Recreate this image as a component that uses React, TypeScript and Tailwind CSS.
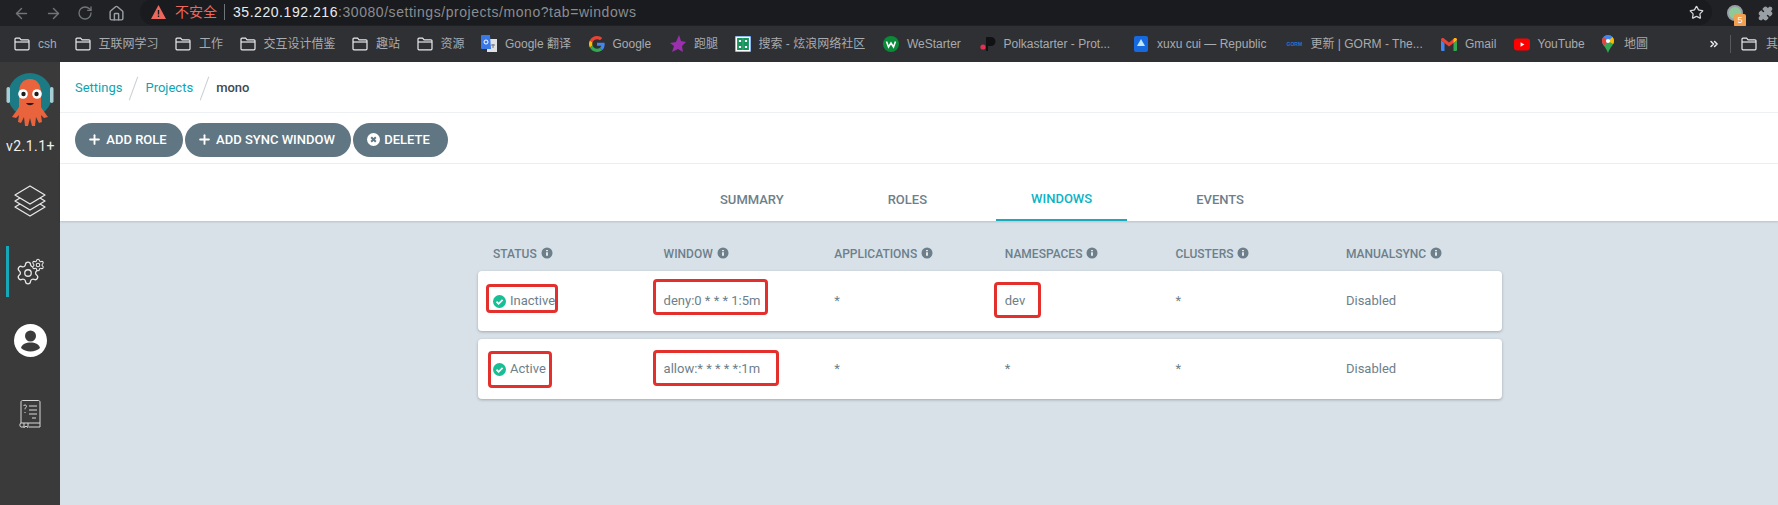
import React from 'react';
import { ArrowLeft, ArrowRight, RotateCw, Home, Star, Puzzle, Plus, ChevronsRight, Settings } from 'lucide-react';

const roboto = { fontFamily: 'Roboto, "Noto Sans CJK SC", sans-serif' };

const FolderIcon = () => (
  <svg width="16" height="14" viewBox="0 0 16 14" fill="none" stroke="#e8eaed" strokeWidth="1.2">
    <path d="M1 2.2c0-.6.4-1 1-1h3.6l1.5 1.6H14c.6 0 1 .4 1 1v8c0 .6-.4 1-1 1H2c-.6 0-1-.4-1-1z" />
    <path d="M1 5h14" />
  </svg>
);

const TranslateIcon = () => (
  <svg width="16" height="18" viewBox="0 0 16 18">
    <rect x="6" y="4" width="10" height="13" fill="#dfe1e5" />
    <path d="M1 0h8l1 14H1a1 1 0 0 1-1-1V1a1 1 0 0 1 1-1z" fill="#3b78e7" />
    <circle cx="5" cy="7" r="2" fill="none" stroke="#fff" strokeWidth="1" />
    <path d="M10 10h4M12 9v4" stroke="#70757a" strokeWidth="1" />
  </svg>
);

const GoogleIcon = () => (
  <svg width="16" height="16" viewBox="0 0 48 48">
    <path fill="#EA4335" d="M24 9.5c3.5 0 6.700 1.200 9.100 3.600l6.800-6.800C35.900 2.400 30.400 0 24 0 14.600 0 6.500 5.400 2.600 13.200l7.900 6.100C12.400 13.700 17.700 9.500 24 9.500z" />
    <path fill="#4285F4" d="M47 24.500c0-1.600-.1-3.100-.4-4.500H24v9h12.900c-.6 3-2.200 5.500-4.700 7.200l7.700 6C44.400 38 47 31.800 47 24.500z" />
    <path fill="#FBBC05" d="M10.500 28.700A14.500 14.500 0 0 1 10.500 19.300l-7.900-6.100a24 24 0 0 0 0 21.600z" />
    <path fill="#34A853" d="M24 48c6.500 0 11.900-2.100 15.900-5.800l-7.700-6c-2.200 1.500-5 2.300-8.200 2.300-6.300 0-11.600-4.200-13.500-9.800l-7.900 6.100C6.500 42.600 14.600 48 24 48z" />
  </svg>
);

const StarFav = () => (
  <svg width="16" height="18" viewBox="0 0 16 18">
    <path d="M9 0l2 6 5 1-4 4 1 6-5-3-6 3 2-6-4-3 6-1z" fill="#9b2fae" />
  </svg>
);

const GridFav = () => (
  <svg width="16" height="16" viewBox="0 0 16 16">
    <rect width="16" height="16" fill="#fff" stroke="#2a6fdb" />
    <path d="M3 3h4v4H3zM9 3h4v4H9zM3 9h4v4H3zM9 9h4v4H9z" fill="none" stroke="#16935a" strokeWidth="1.800" />
  </svg>
);

const WeStarterFav = () => (
  <svg width="16" height="16" viewBox="0 0 16 16">
    <circle cx="8" cy="8" r="8" fill="#0b8a3a" />
    <path d="M3.500 5.500l2 5.500L8 7l2.500 4 2-5.500" fill="none" stroke="#fff" strokeWidth="1.600" />
  </svg>
);

const PolkaFav = () => (
  <svg width="16" height="16" viewBox="0 0 16 16">
    <path d="M6 1h5a4 4 0 0 1 0 9H8v5H6z" fill="#111214" />
    <circle cx="3" cy="11" r="2.600" fill="#e6304f" />
  </svg>
);

const RepublicFav = () => (
  <svg width="14" height="16" viewBox="0 0 14 16">
    <rect width="14" height="16" rx="2" fill="#1769e0" />
    <path d="M7 3l4 7H3z" fill="#bfe6ff" />
  </svg>
);

const GormFav = () => (
  <span className="w-4 text-[5px] leading-none font-bold text-[#1f78d1] whitespace-nowrap">GORM</span>
);

const GmailFav = () => (
  <svg width="16" height="13" viewBox="0 0 16 13">
    <path d="M0 2v10a1 1 0 0 0 1 1h2.500V5z" fill="#4285f4" />
    <path d="M16 2v10a1 1 0 0 1-1 1h-2.500V5z" fill="#34a853" />
    <path d="M0 2l3.500 3L8 8.500 12.500 5 16 2c0-2-2-2.500-3-1.500L8 4.500 3 .5C2-.5 0 0 0 2z" fill="#ea4335" />
    <path d="M12.500 5L16 2c0-2-2-2.500-3-1.500l-.5.4z" fill="#fbbc05" />
  </svg>
);

const YoutubeFav = () => (
  <svg width="17" height="13" viewBox="0 0 17 13">
    <rect width="17" height="13" rx="3.500" fill="#f00" />
    <path d="M7 4l4 2.500L7 9z" fill="#fff" />
  </svg>
);

const MapFav = () => (
  <svg width="12" height="18" viewBox="0 0 12 18">
    <path d="M6 0a6 6 0 0 1 6 6c0 4-4 6-6 12C4 12 0 10 0 6a6 6 0 0 1 6-6z" fill="#34a853" />
    <path d="M6 0a6 6 0 0 1 4.500 2L2 10.500C1 9 0 7.800 0 6a6 6 0 0 1 6-6z" fill="#4285f4" />
    <path d="M1.500 2L6 6 2 10.500C1 9 0 7.800 0 6c0-1.500.6-3 1.500-4z" fill="#ea4335" />
    <path d="M10.500 2A6 6 0 0 1 12 6c0 1-.3 2-.8 3L6 6z" fill="#fbbc05" />
    <circle cx="6" cy="6" r="2.100" fill="#fff" />
  </svg>
);

const bookmarks: { icon: React.ReactNode; label: string; w: number }[] = [
  { icon: <FolderIcon />, label: 'csh', w: 20 },
  { icon: <FolderIcon />, label: '互联网学习', w: 60 },
  { icon: <FolderIcon />, label: '工作', w: 24 },
  { icon: <FolderIcon />, label: '交互设计借鉴', w: 72 },
  { icon: <FolderIcon />, label: '趣站', w: 24 },
  { icon: <FolderIcon />, label: '资源', w: 24 },
  { icon: <TranslateIcon />, label: 'Google 翻译', w: 67 },
  { icon: <GoogleIcon />, label: 'Google', w: 41 },
  { icon: <StarFav />, label: '跑腿', w: 24 },
  { icon: <GridFav />, label: '搜索 - 炫浪网络社区', w: 108 },
  { icon: <WeStarterFav />, label: 'WeStarter', w: 56 },
  { icon: <PolkaFav />, label: 'Polkastarter - Prot...', w: 113 },
  { icon: <RepublicFav />, label: 'xuxu cui — Republic', w: 113 },
  { icon: <GormFav />, label: '更新 | GORM - The...', w: 114 },
  { icon: <GmailFav />, label: 'Gmail', w: 32 },
  { icon: <YoutubeFav />, label: 'YouTube', w: 46 },
  { icon: <MapFav />, label: '地圖', w: 24 },
];

const BrowserChrome = () => (
  <div className="shrink-0" style={{ fontFamily: '"Liberation Sans", "Noto Sans CJK SC", sans-serif' }}>
    <div className="h-[26px] bg-[#202124] flex items-center">
      <div className="w-[140px] pl-[13px] flex items-center gap-[15px] text-[#70757a]">
        <ArrowLeft size={17} />
        <ArrowRight size={17} />
        <RotateCw size={16} />
        <Home size={17} className="text-[#9aa0a6]" />
      </div>
      <div className="w-[1572px] h-[26px] -mt-[2px] bg-[#1a1b1e] rounded-r-full rounded-l-full flex items-center pl-[11px] pr-[6px]">
        <svg width="15" height="14" viewBox="0 0 15 14" className="shrink-0">
          <path d="M7.500 0L15 14H0z" fill="#ee675c" />
          <path d="M7.500 5v4.500M7.500 10.500v1.500" stroke="#1a1b1e" strokeWidth="1.400" />
        </svg>
        <span className="ml-[9px] text-[14px] text-[#ee675c]">不安全</span>
        <span className="ml-[7px] h-[16px] w-px bg-[#70757a]" />
        <span className="ml-[8px] text-[14px] tracking-[0.55px] text-[#e8eaed]">
          35.220.192.216<span className="text-[#8a8d91]">:30080/settings/projects/mono?tab=windows</span>
        </span>
        <Star size={15} className="ml-auto mr-[2px] text-[#d5d7da]" />
      </div>
      <div className="relative ml-[15px] w-[16px] h-[16px] rounded-full bg-[#8fc99a] border-2 border-[#9aa0a6]">
        <span className="absolute left-[5px] top-[7px] w-[12px] h-[13px] rounded-[2px] bg-[#f0a050] text-white text-[9px] leading-[13px] text-center">5</span>
      </div>
      <Puzzle size={15} className="ml-[15px] text-[#9aa0a6] fill-[#9aa0a6]" />
    </div>
    <div className="h-[36px] bg-[#2f3033] flex items-center pl-[14px] relative">
      {bookmarks.map(b => (
        <div key={b.label} className="flex items-center shrink-0 mr-[16.5px]">
          <span className="w-[16px] mr-[8px] flex items-center justify-center">{b.icon}</span>
          <span className="text-[12px] text-[#a8abaf] whitespace-nowrap" style={{ width: b.w }}>{b.label}</span>
        </div>
      ))}
      <div className="absolute right-0 top-0 h-full w-[74px] flex items-center bg-[#2f3033]">
        <ChevronsRight size={14} strokeWidth={3} className="text-[#e8eaed] ml-[4px]" />
        <span className="ml-[10px] h-[18px] w-px bg-[#55585c]" />
        <span className="ml-[10px]"><FolderIcon /></span>
        <span className="ml-[9px] text-[12px] text-[#a8abaf] whitespace-nowrap">其</span>
      </div>
    </div>
  </div>
);

const ArgoLogo = () => (
  <svg width="48" height="61" viewBox="0 0 48 61">
    <circle cx="24" cy="23" r="22" fill="#1b7a84" />
    <rect x="0.500" y="15" width="3.500" height="16" rx="1.700" fill="#a8cdd4" />
    <rect x="44" y="15" width="3.500" height="16" rx="1.700" fill="#a8cdd4" />
    <path d="M13 21c0-9 4-14 11-14s11 5 11 14v14c3 5 5 7 7 10l-4 1-3-3 1 7-3 1-3-6-1 9h-3l-2-8-2 8h-3l-1-9-3 6-3-1 1-7-3 3-4-1c2-3 4-5 7-10z" fill="#e9633d" />
    <circle cx="17" cy="22" r="4.800" fill="#fff" />
    <circle cx="31" cy="22" r="4.800" fill="#fff" />
    <circle cx="17.500" cy="22" r="2.200" fill="#1d1d1d" />
    <circle cx="30.500" cy="22" r="2.200" fill="#1d1d1d" />
    <path d="M20 31c2 3 6 3 8 0z" fill="#2b1b16" />
  </svg>
);

const LayersIcon = () => (
  <svg width="34" height="34" viewBox="0 0 34 34" fill="none" stroke="#e8e8e8" strokeWidth="1.300" strokeLinejoin="round">
    <path d="M17 3L32 12 17 21 2 12z" />
    <path d="M7 15L2 18 17 27 32 18l-5-3" />
    <path d="M7 21l-5 3 15 9 15-9-5-3" />
  </svg>
);

const GearsIcon = () => (
  <svg width="30" height="28" viewBox="0 0 30 28">
    <Settings x={0} y={2} width={26} height={26} stroke="#e8e8e8" strokeWidth={1.200} />
    <Settings x={16} y={0} width={14} height={14} stroke="#e8e8e8" strokeWidth={1.800} fill="#3a3a3a" />
  </svg>
);

const UserIcon = () => (
  <svg width="33" height="33" viewBox="0 0 33 33">
    <circle cx="16.500" cy="16.500" r="16.500" fill="#fff" />
    <circle cx="16.500" cy="12" r="5.500" fill="#3b3b3b" />
    <path d="M7 24c1-4 5-5.500 9.500-5.500S25 20 26 24c-2.400 2.200-5.700 3.500-9.500 3.500S9.400 26.200 7 24z" fill="#3b3b3b" />
  </svg>
);

const BookIcon = () => (
  <svg width="22" height="28" viewBox="0 0 22 28" fill="none" stroke="#d8d8d8" strokeWidth="1">
    <path d="M2 2c0-.8.6-1.500 1.500-1.500h16c.8 0 1.500.7 1.500 1.500v21H2z" />
    <path d="M2 23c-1.500 0-1.500 4 0 4h3M21 23v4H10" />
    <path d="M5 23v4.500l2-1.300 2 1.300V23" />
    <path d="M10 6h8M10 10h8M10 14h8M13 18h4" />
    <path d="M4.500 6c.5-1.500 3-1.300 3 .3 0 1.200-1.500 1.200-1.500 3M6 12v1" />
  </svg>
);

const Sidebar = () => (
  <div className="w-[60px] shrink-0 bg-[#3a3a3a] flex flex-col items-center overflow-hidden">
    <div className="mt-[10px] h-[61px]"><ArgoLogo /></div>
    <div className="w-full mt-[3px] pl-[6px]">
      <div className="w-[49px] overflow-hidden whitespace-nowrap text-[14px] leading-[20px] text-[#f0f0f0] tracking-[0.45px]" style={roboto}>v2.1.1+a</div>
    </div>
    <div className="mt-[10px] h-[68px] flex items-center justify-center"><LayersIcon /></div>
    <div className="relative mt-[4px] h-[68px] w-full flex items-center justify-center">
      <span className="absolute left-[6px] top-[8px] w-[3px] h-[51px] bg-[#15a8b8]" />
      <GearsIcon />
    </div>
    <div className="h-[68px] flex items-center justify-center"><UserIcon /></div>
    <div className="h-[80px] flex items-center justify-center"><BookIcon /></div>
  </div>
);

const Action = ({ icon, label, width }: { icon: React.ReactNode; label: string; width: number }) => (
  <button className="h-[34px] rounded-full bg-[#607683] text-white flex items-center justify-center gap-[4px] pr-[4px] text-[13px] font-medium" style={{ width }}>
    {icon}
    {label}
  </button>
);

const DeleteIcon = () => (
  <svg width="13" height="13" viewBox="0 0 13 13">
    <circle cx="6.500" cy="6.500" r="6.500" fill="#fff" />
    <path d="M4.200 4.200l4.600 4.600M8.800 4.200l-4.600 4.600" stroke="#607683" strokeWidth="2" />
  </svg>
);

const InfoIcon = () => (
  <svg width="12" height="12" viewBox="0 0 12 12" className="inline-block ml-[4px] align-[-1px]">
    <circle cx="6" cy="6" r="5.500" fill="#6d7f8b" />
    <path d="M6 5.300v3.500M6 3v1.300" stroke="#fff" strokeWidth="1.600" />
  </svg>
);

const CheckIcon = () => (
  <svg width="13" height="13" viewBox="0 0 13 13" className="shrink-0">
    <circle cx="6.500" cy="6.500" r="6.500" fill="#18be94" />
    <path d="M3.500 6.700l2.100 2.100 4-4" fill="none" stroke="#fff" strokeWidth="1.700" />
  </svg>
);

// red annotation drawn over the screenshot
const Mark = ({ className }: { className: string }) => (
  <span className={`absolute border-[3px] border-[#e3302c] rounded-[4px] pointer-events-none ${className}`} />
);

const columns = ['STATUS', 'WINDOW', 'APPLICATIONS', 'NAMESPACES', 'CLUSTERS', 'MANUALSYNC'];
const gridCols = 'grid grid-cols-[repeat(5,170.6px)_1fr] pl-[15px] items-center';

const Tabs = () => (
  <div className="h-[57px] bg-white flex items-end pl-[625px] gap-[34px] shadow-[0_1px_2px_rgba(0,0,0,0.15)] relative text-[13px] font-medium text-[#6d7f8b] shrink-0">
    <div className="h-[57px] px-[35px] flex items-center pt-[14px]">SUMMARY</div>
    <div className="h-[57px] px-[35px] flex items-center pt-[14px]">ROLES</div>
    <div className="h-[57px] px-[35px] flex items-center pt-[14px] text-[#0db3c5] border-b-2 border-[#1aaab9]">WINDOWS</div>
    <div className="h-[57px] px-[35px] flex items-center pt-[14px]">EVENTS</div>
  </div>
);

const App = () => {
  return (
    <div className="w-[1778px] h-[505px] overflow-hidden flex flex-col bg-[#d8e1e8]" style={roboto}>
      <BrowserChrome />
      <div className="flex flex-1 min-h-0">
        <Sidebar />
        <div className="flex-1 flex flex-col bg-[#d8e1e8]">
          <div className="h-[51px] bg-white border-b border-[#eef1f3] flex items-center pl-[15px] pt-[2px] text-[13px] shrink-0">
            <span className="text-[#0ba5b5]">Settings</span>
            <span className="mx-[11px] w-px h-[25px] bg-[#c9d1d6] rotate-[20deg]" />
            <span className="text-[#0ba5b5]">Projects</span>
            <span className="mx-[11px] w-px h-[25px] bg-[#c9d1d6] rotate-[20deg]" />
            <span className="text-[#3d4a52] font-medium">mono</span>
          </div>
          <div className="h-[51px] bg-white border-b border-[#eef1f3] flex items-center pl-[15px] pt-[3px] gap-[2px] shrink-0">
            <Action icon={<Plus size={15} strokeWidth={3} />} label="ADD ROLE" width={108} />
            <Action icon={<Plus size={15} strokeWidth={3} />} label="ADD SYNC WINDOW" width={166} />
            <Action icon={<DeleteIcon />} label="DELETE" width={95} />
          </div>
          <Tabs />
          <div className="ml-[418px] w-[1024px] text-[#6d7f8b]">
            <div className={`${gridCols} h-[50px] pt-[16px] text-[12px] font-medium`}>
              {columns.map(c => (
                <div key={c}>{c}<InfoIcon /></div>
              ))}
            </div>
            <div className={`${gridCols} relative h-[60px] bg-white rounded-[4px] shadow-[0_1px_3px_rgba(0,0,0,0.25)] text-[13px]`}>
              <div className="flex items-center gap-[4px]"><CheckIcon />Inactive</div>
              <div>deny:0 * * * 1:5m</div>
              <div>*</div>
              <div>dev</div>
              <div>*</div>
              <div>Disabled</div>
              <Mark className="left-[8px] top-[13px] w-[72px] h-[29px]" />
              <Mark className="left-[175px] top-[8px] w-[115px] h-[36px]" />
              <Mark className="left-[516px] top-[11px] w-[47px] h-[36px]" />
            </div>
            <div className={`${gridCols} relative mt-[8px] h-[60px] bg-white rounded-[4px] shadow-[0_1px_3px_rgba(0,0,0,0.25)] text-[13px]`}>
              <div className="flex items-center gap-[4px]"><CheckIcon />Active</div>
              <div>allow:* * * * *:1m</div>
              <div>*</div>
              <div>*</div>
              <div>*</div>
              <div>Disabled</div>
              <Mark className="left-[10px] top-[12px] w-[64px] h-[37px]" />
              <Mark className="left-[175px] top-[11px] w-[126px] h-[36px]" />
            </div>
          </div>
        </div>
      </div>
    </div>
  );
};

export default App;
